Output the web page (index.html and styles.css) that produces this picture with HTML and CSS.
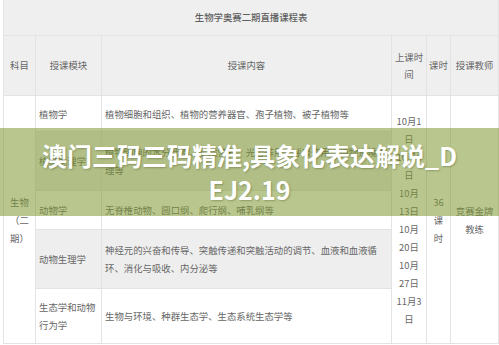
FILE: index.html
```html
<!DOCTYPE html>
<html lang="zh-CN">
<head>
<meta charset="utf-8">
<title>生物学奥赛二期直播课程表</title>
<link rel="stylesheet" href="styles.css">
</head>
<body>
<div class="page">
  <table class="schedule">
    <colgroup>
      <col class="c-subj"><col class="c-mod"><col class="c-content"><col class="c-date"><col class="c-hours"><col class="c-teacher">
    </colgroup>
    <tr class="r-title"><th colspan="6" class="title">生物学奥赛二期直播课程表</th></tr>
    <tr class="r-head">
      <th>科目</th><th>授课模块</th><th>授课内容</th><th>上课时<br>间</th><th>课时</th><th>授课教师</th>
    </tr>
    <tr class="r1">
      <td rowspan="5" class="subj">生物<br>（二<br>期）</td>
      <td class="mod">植物学</td>
      <td class="content">植物细胞和组织、植物的营养器官、孢子植物、被子植物等</td>
      <td rowspan="5" class="center date">10月1<br>日<br>10月6<br>日<br>10月<br>13日<br>10月<br>20日<br>10月<br>27日<br>11月3<br>日</td>
      <td rowspan="5" class="center">36课<br>时</td>
      <td rowspan="5" class="center">竞赛金牌<br>教练</td>
    </tr>
    <tr class="r2 stripe">
      <td class="mod">植物生理学</td>
      <td class="content">植物细胞的水分代谢、矿质营养、光合作用、呼吸作用、植物逆境生理等</td>
    </tr>
    <tr class="r3">
      <td class="mod">动物学</td>
      <td class="content">无脊椎动物、圆口纲、爬行纲、哺乳纲等</td>
    </tr>
    <tr class="r4 stripe">
      <td class="mod">动物生理学</td>
      <td class="content">神经元的兴奋和传导、突触传递和突触活动的调节、血液和血液循环、消化与吸收、内分泌等</td>
    </tr>
    <tr class="r5">
      <td class="mod">生态学和动物行为学</td>
      <td class="content">生物与环境、种群生态学、生态系统生态学等</td>
    </tr>
  </table>
  <div class="banner">
    <p class="banner-text">澳门三码三码精准,具象化表达解说_DEJ2.19</p>
  </div>
</div>
</body>
</html>
```

FILE: styles.css
```css
html, body {
  margin: 0;
  padding: 0;
  background: #ffffff;
}

.page {
  position: relative;
  width: 499px;
  height: 345px;
  overflow: hidden;
  font-family: "Noto Sans CJK SC", "Noto Sans", sans-serif;
}

.schedule {
  table-layout: fixed;
  border-collapse: collapse;
  width: 495px;
  margin: -1px 0 0 3px;
  font-size: 9.4px;
  color: #666666;
}

.c-subj { width: 32px; }
.c-mod { width: 66px; }
.c-content { width: 290px; }
.c-date { width: 35px; }
.c-hours { width: 24px; }
.c-teacher { width: 48px; }

.schedule th,
.schedule td {
  border: 1px solid #e3e3e3;
  padding: 0 3px;
  line-height: 18px;
  font-weight: normal;
  vertical-align: middle;
}

.schedule th {
  background: #efefef;
  text-align: center;
  padding: 0 1px;
  line-height: 17px;
}

.schedule .title {
  font-weight: 500;
  color: #5e5e5e;
}

.r-title { height: 36px; }
.r-head { height: 60px; }
.r1 { height: 36px; }
.r2 { height: 59px; }
.r3 { height: 39px; }
.r4 { height: 59px; }
.r5 { height: 55px; }

.schedule td { background: #ffffff; }
.schedule .stripe td { background: #eeeeee; }

.subj { text-align: center; }
.mod { text-align: left; }
.content { text-align: left; padding-right: 10px; }
.center { text-align: center; padding: 0 1px; }
.date { line-height: 17px; }

.banner {
  position: absolute;
  left: 0;
  top: 128px;
  width: 499px;
  height: 88px;
  box-sizing: border-box;
  padding: 0 38px;
  background: rgba(128, 153, 51, 0.55);
  display: flex;
  align-items: center;
  justify-content: center;
}

.banner-text {
  margin: 0;
  color: #ffffff;
  font-size: 25px;
  font-weight: bold;
  line-height: 34px;
  text-align: center;
  word-break: break-all;
  text-shadow: 1px 1px 2px rgba(60, 70, 30, 0.35);
}
```
